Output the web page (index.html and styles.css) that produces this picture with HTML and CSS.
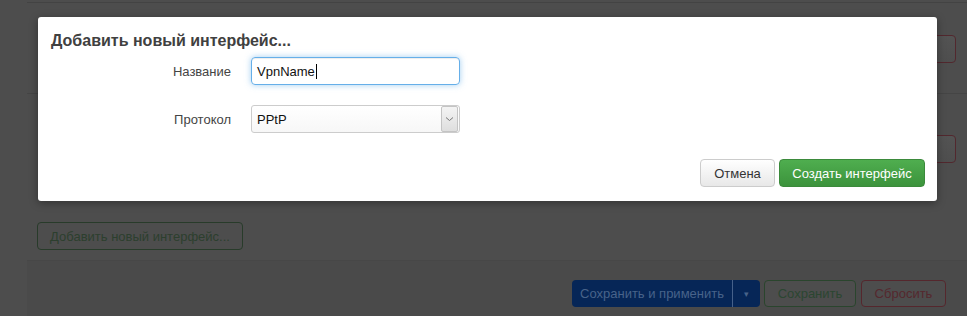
FILE: index.html
```html
<!DOCTYPE html>
<html lang="ru">
<head>
    <meta charset="UTF-8">
    <meta name="viewport" content="width=device-width, initial-scale=1.0">
    <title>Интерфейсы</title>
    <link rel="stylesheet" href="styles.css">
</head>
<body>
    <div class="page">
        <div class="section">
            <div class="row row-first"><button class="btn-del" type="button"></button></div>
            <div class="row row-second"><button class="btn-del" type="button"></button></div>
        </div>
        <div class="add-row">
            <button class="btn-add" type="button">Добавить новый интерфейс...</button>
        </div>
        <div class="footer">
            <div class="split">
                <button class="split-main" type="button">Сохранить и применить</button>
                <button class="split-toggle" type="button">&#9662;</button>
            </div>
            <button class="btn-save" type="button">Сохранить</button>
            <button class="btn-reset" type="button">Сбросить</button>
        </div>
    </div>

    <div class="modal">
        <h4 class="modal-title">Добавить новый интерфейс...</h4>
        <div class="field">
            <label class="field-label">Название</label>
            <div class="input focused">VpnName<span class="caret"></span></div>
        </div>
        <div class="field">
            <label class="field-label">Протокол</label>
            <div class="select">
                <span>PPtP</span>
                <span class="select-arrow">
                    <svg width="9" height="6" viewBox="0 0 9 6"><path d="M1 1.5 L4.5 4.5 L8 1.5" fill="none" stroke="#777" stroke-width="1"/></svg>
                </span>
            </div>
        </div>
        <div class="modal-actions">
            <button class="btn-cancel" type="button">Отмена</button>
            <button class="btn-create" type="button">Создать интерфейс</button>
        </div>
    </div>
</body>
</html>
```

FILE: styles.css
```css
*{margin:0;padding:0;box-sizing:border-box;}
body{background:#4d4d4d;font-family:"Liberation Sans",Arial,sans-serif;font-size:13px;color:#333;overflow:hidden;height:316px;}
button{font-family:inherit;font-size:13px;cursor:pointer;}

/* dimmed page under the dialog */
.page{margin-left:27px;padding-top:2px;}
.section{border-top:1px solid #434343;}
.row{display:flex;justify-content:flex-end;padding-right:11px;}
.row-first{height:91px;padding-top:32px;border-bottom:1px solid #454545;}
.row-second{height:100px;padding-top:41px;}
.btn-del{width:80px;height:28px;border:1px solid #52282e;border-radius:4px;background:linear-gradient(#535353,#4e4e4e);}
.add-row{padding:28px 0 10px 10px;}
.btn-add{width:206px;height:28px;border:1px solid #283b2a;border-radius:4px;background:#4d4d4d;color:#2c3f2e;}
.footer{background:#4a4a4a;border-top:1px solid #474747;height:56px;padding:19px 21px 0 0;display:flex;justify-content:flex-end;align-items:flex-start;gap:4px;}
.split{display:flex;height:27px;background:#062657;border-radius:4px;}
.split button{border:0;background:none;color:#48638a;height:27px;}
.split-main{width:161px;border-right:1px solid #46618a !important;}
.split-toggle{width:27px;font-size:9px;}
.btn-save,.btn-reset{height:27px;border-radius:4px;background:#4d4d4d;}
.btn-save{width:92px;border:1px solid #2a452d;color:#2b4631;}
.btn-reset{width:85px;margin-left:1px;border:1px solid #55272d;color:#55282e;}

/* dialog */
.modal{position:absolute;left:38px;top:17px;width:899px;height:184px;background:#fff;border-radius:3px;padding:14px 12px 0 13px;box-shadow:0 2px 8px rgba(0,0,0,.35);}
.modal-title{font-size:16px;line-height:20px;font-weight:bold;color:#404040;margin-bottom:6px;}
.field{display:flex;align-items:center;margin-bottom:20px;}
.field-label{width:200px;text-align:right;padding-right:20px;color:#444;}
.input,.select{width:209px;height:28px;border:1px solid #ccc;border-radius:3px;display:flex;align-items:center;color:#111;}
.input{padding:0 5px;}
.focused{border-color:#66afe9;border-radius:4px;box-shadow:inset 0 1px 1px rgba(0,0,0,.075),0 0 6px rgba(102,175,233,.6);}
.caret{display:inline-block;width:1px;height:15px;background:#000;margin-left:1px;}
.select{padding-left:5px;padding-right:1px;justify-content:space-between;background:linear-gradient(#fff,#f7f7f7);}
.select-arrow{width:17px;height:26px;border:1px solid #c4c4c4;background:linear-gradient(#f4f4f4,#dedede);display:flex;align-items:center;justify-content:center;border-radius:2px;}
.modal-actions{display:flex;justify-content:flex-end;gap:4px;margin-top:26px;}
.btn-cancel,.btn-create{height:28px;padding:0;border-radius:4px;}
.btn-cancel{width:75px;border:1px solid #ccc;background:linear-gradient(#fff,#e8e8e8);color:#333;}
.btn-create{width:146px;border:1px solid #3b8a3b;background:linear-gradient(#4fae4f,#3c933c);color:#fff;}
```
